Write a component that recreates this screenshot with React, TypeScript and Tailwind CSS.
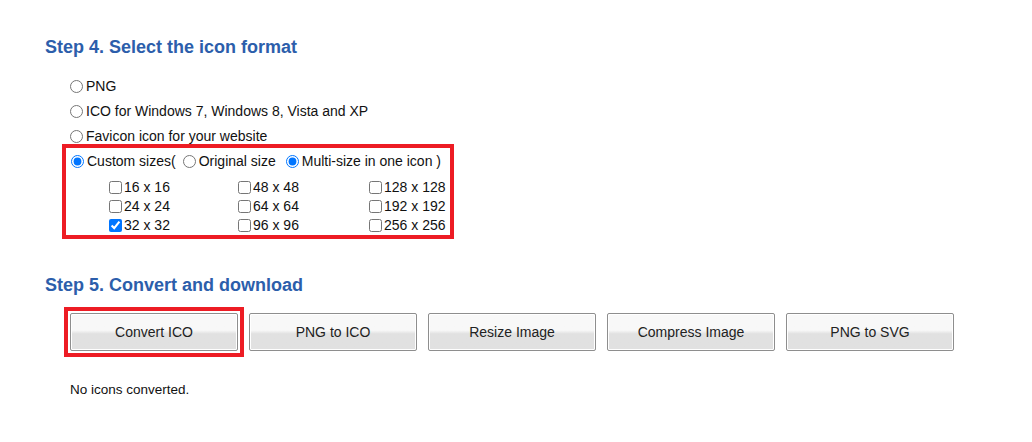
import { useState } from "react"

const sizes = [
  ["16 x 16", "48 x 48", "128 x 128"],
  ["24 x 24", "64 x 64", "192 x 192"],
  ["32 x 32", "96 x 96", "256 x 256"],
]

const buttons = ["Convert ICO", "PNG to ICO", "Resize Image", "Compress Image", "PNG to SVG"]

export default function App() {
  const [format, setFormat] = useState("custom")
  const [mode, setMode] = useState("multi")
  const [checked, setChecked] = useState<string[]>(["32 x 32"])

  const toggle = (s: string) => {
    setChecked((prev) => (prev.includes(s) ? prev.filter((x) => x !== s) : [...prev, s]))
  }

  const btn =
    "h-[38px] w-[168px] rounded-[2px] border border-[#8e8e8e] bg-gradient-to-b from-[#f8f8f8] from-45% to-[#e1e1e1] to-55% text-[14px] text-[#222] shadow-[inset_0_0_0_1px_#ffffff]"

  return (
    <div className="min-h-screen bg-white pl-[45px] pt-[37px] font-['Liberation_Sans',Arial,sans-serif] text-[14px] text-[#111]">
      <h2 className="text-[18px] leading-[20px] font-bold text-[#2c5eab]">Step 4. Select the icon format</h2>

      <div className="mt-[17px] ml-[20px]">
        <label className="flex h-[25px] items-center">
          <input type="radio" name="format" className="ml-[5px] mr-[3px] h-[13px] w-[13px]" checked={format === "png"} onChange={() => setFormat("png")} />
          PNG
        </label>
        <label className="flex h-[25px] items-center">
          <input type="radio" name="format" className="ml-[5px] mr-[3px] h-[13px] w-[13px]" checked={format === "ico"} onChange={() => setFormat("ico")} />
          ICO for Windows 7, Windows 8, Vista and XP
        </label>
        <label className="flex h-[25px] items-center">
          <input type="radio" name="format" className="ml-[5px] mr-[3px] h-[13px] w-[13px]" checked={format === "favicon"} onChange={() => setFormat("favicon")} />
          Favicon icon for your website
        </label>

        <div className="-mt-[5px] -ml-[3px] w-[392px] border-4 border-[#ed1c24]">
          <div className="mt-px flex h-[25px] items-center">
            <label className="flex items-center">
              <input type="radio" name="format" className="ml-[5px] mr-[3px] h-[13px] w-[13px]" checked={format === "custom"} onChange={() => setFormat("custom")} />
              Custom sizes(
            </label>
            <label className="ml-[2px] flex items-center">
              <input type="radio" name="mode" className="ml-[5px] mr-[3px] h-[13px] w-[13px]" checked={mode === "original"} onChange={() => setMode("original")} />
              Original size
            </label>
            <label className="ml-[5px] flex items-center">
              <input type="radio" name="mode" className="ml-[5px] mr-[3px] h-[13px] w-[13px]" checked={mode === "multi"} onChange={() => setMode("multi")} />
              Multi-size in one icon )
            </label>
          </div>

          <div className="mt-[4px] ml-[43px] grid grid-cols-[129px_131px_1fr]">
            {sizes.flat().map((s) => (
              <label key={s} className="flex h-[19px] items-center">
                <input type="checkbox" className="mr-[2px] h-[13px] w-[13px]" checked={checked.includes(s)} onChange={() => toggle(s)} />
                {s}
              </label>
            ))}
          </div>
        </div>
      </div>

      <h2 className="mt-[36px] text-[18px] leading-[20px] font-bold text-[#2c5eab]">Step 5. Convert and download</h2>

      <div className="mt-[18px] ml-[25px] flex gap-[11px]">
        <div className="-m-[6px] border-4 border-[#ed1c24] p-[2px]">
          <button type="button" className={btn + " block"}>
            {buttons[0]}
          </button>
        </div>
        {buttons.slice(1).map((b) => (
          <button key={b} type="button" className={btn}>
            {b}
          </button>
        ))}
      </div>

      <p className="mt-[31px] ml-[25px] text-[13.5px] leading-[15px]">No icons converted.</p>
    </div>
  )
}
